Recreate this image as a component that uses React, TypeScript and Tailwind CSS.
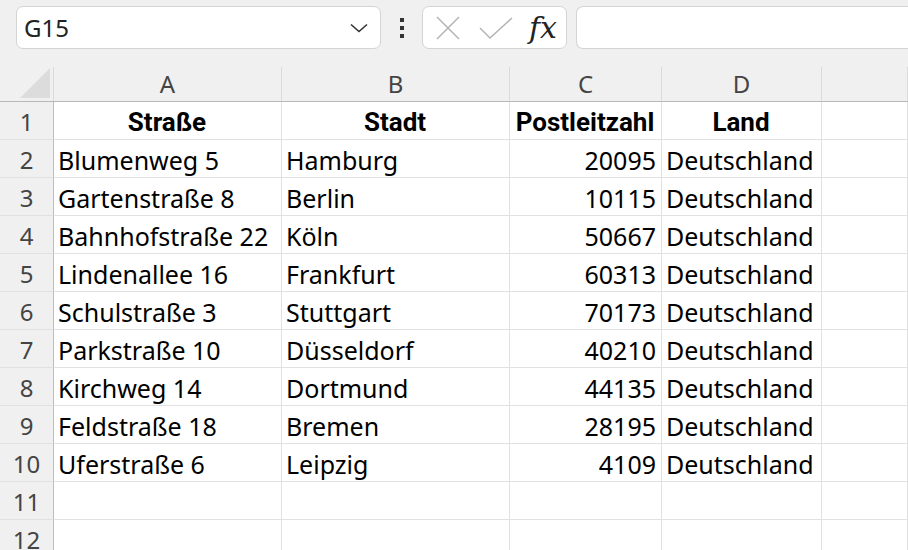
const rows: string[][] = [
  ["Blumenweg 5", "Hamburg", "20095", "Deutschland"],
  ["Gartenstraße 8", "Berlin", "10115", "Deutschland"],
  ["Bahnhofstraße 22", "Köln", "50667", "Deutschland"],
  ["Lindenallee 16", "Frankfurt", "60313", "Deutschland"],
  ["Schulstraße 3", "Stuttgart", "70173", "Deutschland"],
  ["Parkstraße 10", "Düsseldorf", "40210", "Deutschland"],
  ["Kirchweg 14", "Dortmund", "44135", "Deutschland"],
  ["Feldstraße 18", "Bremen", "28195", "Deutschland"],
  ["Uferstraße 6", "Leipzig", "4109", "Deutschland"],
];

const cols = "grid grid-cols-[54px_228px_228px_152px_160px_1fr]";
const cell = "h-[38px] border-r border-b border-[#e1e1e1] pl-[4px] pr-[5px] pt-[5px] leading-[30px] whitespace-nowrap overflow-hidden";
const head = `${cell} text-center font-['Roboto',sans-serif] font-bold text-[26px]`;
const rowHead =
  "h-[38px] border-r border-b border-r-[#bdbdbd] border-b-[#e1e1e1] bg-[#f0f0f0] text-center text-[24px] text-[#444] pt-[5px] leading-[30px]";

function Toolbar() {
  return (
    <div className="flex h-[67px] items-start bg-[#f0f0f0] pt-[6px] pl-[16px]">
      <div className="flex h-[43px] w-[365px] items-center justify-between rounded-[7px] border border-[#d4d4d4] bg-white pl-[7px] pr-[12px]">
        <span className="text-[24px] text-[#222]">G15</span>
        <svg width="18" height="10" viewBox="0 0 18 10" fill="none">
          <path d="M1 1.5l8 7 8-7" stroke="#333" strokeWidth="1.6" />
        </svg>
      </div>
      <div className="flex h-[43px] w-[41px] flex-col items-center justify-center gap-[4px]">
        <span className="block h-[4px] w-[4px] bg-[#333]" />
        <span className="block h-[4px] w-[4px] bg-[#333]" />
        <span className="block h-[4px] w-[4px] bg-[#333]" />
      </div>
      <div className="flex h-[43px] w-[145px] items-center rounded-[7px] border border-[#d4d4d4] bg-white pl-[12px]">
        <svg width="26" height="26" viewBox="0 0 26 26" fill="none">
          <path d="M2 2l22 22M24 2L2 24" stroke="#b4b4b4" strokeWidth="1.5" />
        </svg>
        <svg className="ml-[18px]" width="34" height="22" viewBox="0 0 34 22" fill="none">
          <path d="M1 11l10 10L33 1" stroke="#b4b4b4" strokeWidth="1.5" />
        </svg>
        <span className="ml-[16px] font-['DejaVu_Serif',serif] text-[30px] italic leading-none text-[#222]">
          fx
        </span>
      </div>
      <div className="ml-[9px] h-[43px] flex-1 rounded-l-[7px] border border-r-0 border-[#d4d4d4] bg-white" />
    </div>
  );
}

export default function App() {
  const letters = ["A", "B", "C", "D", ""];
  return (
    <div className="h-[550px] w-[908px] overflow-hidden bg-white font-['Noto_Sans',sans-serif] text-[25px] text-black">
      <Toolbar />
      <div className={`${cols} h-[35px] border-b border-[#b8b8b8] bg-[#f0f0f0]`}>
        <div className="relative border-r border-[#dadada]">
          <div className="absolute left-[20px] top-[1px] h-[30px] w-[30px] bg-[#dcdcdc] [clip-path:polygon(100%_0,100%_100%,0_100%)]" />
        </div>
        {letters.map((l, i) => (
          <div
            key={i}
            className="border-r border-[#dadada] text-center text-[24px] leading-[34px] text-[#444]"
          >
            {l}
          </div>
        ))}
      </div>
      <div className={cols}>
        <div className={rowHead}>1</div>
        <div className={head}>Straße</div>
        <div className={head}>Stadt</div>
        <div className={`${head} px-[3px]`}>Postleitzahl</div>
        <div className={head}>Land</div>
        <div className={cell} />
        {rows.map((r, i) => (
          <div key={i} className="contents">
            <div className={rowHead}>{i + 2}</div>
            <div className={cell}>{r[0]}</div>
            <div className={cell}>{r[1]}</div>
            <div className={`${cell} text-right`}>{r[2]}</div>
            <div className={cell}>{r[3]}</div>
            <div className={cell} />
          </div>
        ))}
        {[11, 12].map((n) => (
          <div key={n} className="contents">
            <div className={rowHead}>{n}</div>
            <div className={cell} />
            <div className={cell} />
            <div className={cell} />
            <div className={cell} />
            <div className={cell} />
          </div>
        ))}
      </div>
    </div>
  );
}
